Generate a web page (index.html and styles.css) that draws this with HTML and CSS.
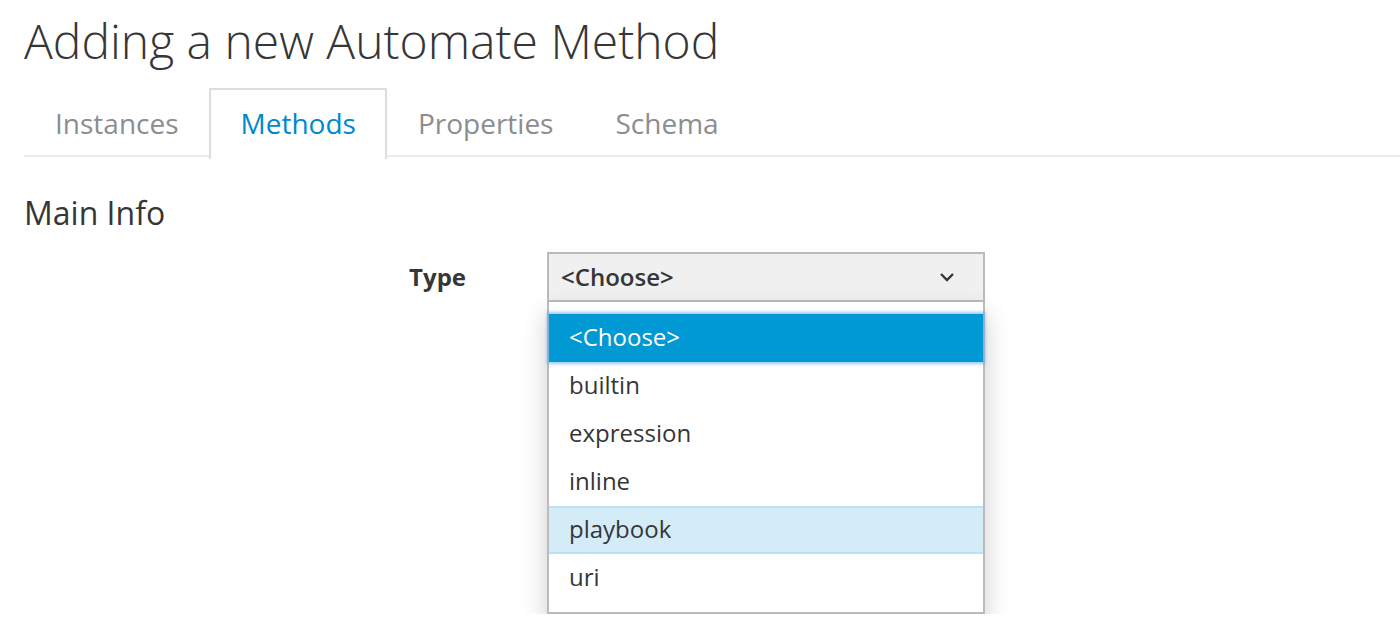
FILE: index.html
```html
<!DOCTYPE html>
<html>
<head>
<meta charset="utf-8">
<link rel="stylesheet" href="styles.css">
</head>
<body>
<div class="page">
  <h1 class="title">Adding a new Automate Method</h1>
  <ul class="tabs">
    <li class="tab">Instances</li>
    <li class="tab active">Methods</li>
    <li class="tab">Properties</li>
    <li class="tab">Schema</li>
  </ul>
  <h3 class="section">Main Info</h3>
  <div class="form-row">
    <label class="label">Type</label>
    <div class="select-wrap">
      <div class="select">
        <span class="select-value">&lt;Choose&gt;</span>
        <svg class="chevron" width="16" height="10" viewBox="0 0 16 10"><path d="M2 2 L8 8 L14 2" fill="none" stroke="#363636" stroke-width="2.4"/></svg>
      </div>
      <ul class="menu">
        <li class="opt selected">&lt;Choose&gt;</li>
        <li class="opt">builtin</li>
        <li class="opt">expression</li>
        <li class="opt">inline</li>
        <li class="opt hover">playbook</li>
        <li class="opt">uri</li>
      </ul>
    </div>
  </div>
</div>
</body>
</html>
```
FILE: styles.css
```css
* { box-sizing: border-box; }
html, body { margin: 0; padding: 0; background: #fff; }
body { font-family: "Open Sans", "Noto Sans", sans-serif; color: #363636; }
.page { padding-left: 24px; }
.title {
  margin: 0;
  padding-top: 6px;
  font-size: 48px;
  font-weight: 300;
  line-height: 70px;
  color: #363636;
}
.tabs {
  list-style: none;
  margin: 12px 0 0 0;
  padding: 0;
  display: flex;
  border-bottom: 2px solid #ededed;
  height: 69px;
}
.tab {
  padding: 0 29px;
  border: 2px solid transparent;
  border-bottom: none;
  font-size: 28px;
  line-height: 66px;
  color: #8b8d8f;
  margin-bottom: -2px;
  height: 69px;
}
.tab:first-child { padding-right: 28px; }
.tab.active {
  color: #0088ce;
  border-color: #ddd;
  background: #fff;
  height: 71px;
  padding: 0 29px 0 30px;
}
.section {
  margin: 0;
  padding-top: 34px;
  font-size: 32px;
  font-weight: 400;
  line-height: 44px;
  color: #363636;
}
.form-row {
  display: flex;
  align-items: flex-start;
  margin-top: 17px;
}
.label {
  width: 442px;
  text-align: right;
  font-size: 24px;
  font-weight: 700;
  line-height: 49px;
}
.select-wrap {
  margin-left: 81px;
  width: 438px;
}
.select {
  height: 50px;
  background: #f0f0f0;
  border: 2px solid #bbb;
  display: flex;
  align-items: center;
  justify-content: space-between;
  padding: 0 28px 2px 12px;
}
.select-value {
  font-size: 24px;
  font-weight: 600;
  color: #363636;
}
.chevron { display: block; margin-top: 2px; }
.menu {
  list-style: none;
  margin: 0;
  padding: 12px 0 10px 0;
  border: 2px solid #bbb;
  border-top: none;
  background: #fff;
  box-shadow: 0 12px 24px rgba(0,0,0,0.2);
}
.opt {
  height: 48px;
  line-height: 46px;
  padding-left: 20px;
  font-size: 24px;
  color: #363636;
}
.opt.selected {
  background: #0099d3;
  color: #fff;
  box-shadow: 0 0 3px 2px rgba(80,160,240,0.55);
  position: relative;
}
.opt.hover {
  background: #d4ebf8;
  border-top: 2px solid #bde0f5;
  border-bottom: 2px solid #bde0f5;
  line-height: 42px;
}
```
